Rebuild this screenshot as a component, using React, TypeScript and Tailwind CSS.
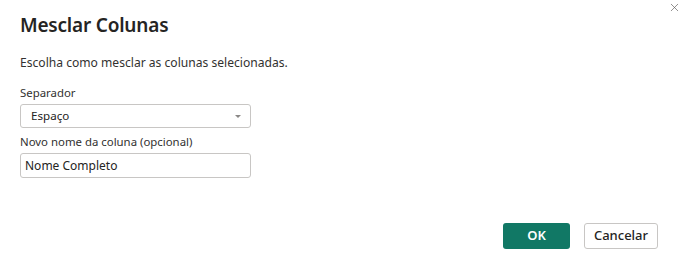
import { X } from "lucide-react";

// Diálogo "Mesclar Colunas"
export default function App() {
  return (
    <div
      className="relative w-[686px] h-[268px] bg-white text-[#252423]"
      style={{ fontFamily: '"Noto Sans", "Open Sans", sans-serif' }}
    >
      {/* botão fechar */}
      <button className="absolute top-[1px] right-[5px] w-[13px] h-[13px] flex items-center justify-center text-[#605e5c]">
        <X className="w-[13px] h-[13px]" strokeWidth={1.25} />
      </button>

      <div className="flex flex-col px-5 pt-[11px]">
        <h1 className="text-[19px] leading-[28px] font-semibold tracking-[-0.2px]">Mesclar Colunas</h1>

        <p className="mt-[15px] text-[12.1px] leading-[18px] text-[#323130]">
          Escolha como mesclar as colunas selecionadas.
        </p>

        {/* separador */}
        <label className="mt-[13px] text-[11.4px] leading-[16px] text-[#323130]">Separador</label>
        <div className="mt-[3px] w-[231px] h-[24px] border border-[#c8c6c4] rounded-[3px] flex items-center justify-between pl-[10px] pr-[9px]">
          <span className="text-[11.6px] text-[#252423]">Espaço</span>
          <svg width="6" height="3" viewBox="0 0 6 3" className="text-[#8a8886]">
            <path d="M0 0h6L3 3z" fill="currentColor" />
          </svg>
        </div>

        {/* nome da coluna */}
        <label className="mt-[6px] text-[11.4px] leading-[16px] text-[#323130]">Novo nome da coluna (opcional)</label>
        <div className="mt-[3px] w-[231px] h-[25px] border border-[#c8c6c4] rounded-[3px] flex items-center pl-[4px]">
          <span className="text-[12px] text-[#252423]">Nome Completo</span>
        </div>

        {/* ações */}
        <div className="mt-[45px] flex justify-end gap-[14px] pr-[8px]">
          <button className="w-[67px] h-[26px] rounded-[3px] bg-[#117865] text-white text-[13px] font-semibold">
            OK
          </button>
          <button className="w-[74px] h-[26px] rounded-[3px] border border-[#c8c6c4] bg-white text-[#252423] text-[13px] font-medium">
            Cancelar
          </button>
        </div>
      </div>
    </div>
  );
}
